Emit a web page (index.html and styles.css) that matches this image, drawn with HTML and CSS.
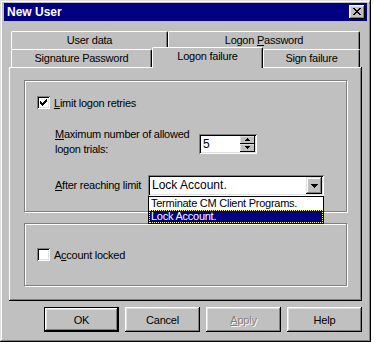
FILE: index.html
```html
<!DOCTYPE html>
<html lang="en">
<head>
  <meta charset="UTF-8" />
  <title>New User</title>
  <link rel="stylesheet" href="styles.css">
</head>
<body>
  <div class="window">
    <div class="titlebar">
      <span class="title">New User</span>
      <span class="close-btn">
        <svg width="8" height="7" viewBox="0 0 8 7" shape-rendering="crispEdges">
          <path d="M0 0h2v1h-2zM6 0h2v1h-2zM1 1h2v1h-2zM5 1h2v1h-2zM2 2h4v1h-4zM3 3h2v1h-2zM2 4h4v1h-4zM1 5h2v1h-2zM5 5h2v1h-2zM0 6h2v1h-2zM6 6h2v1h-2z" fill="#000"/>
        </svg>
      </span>
    </div>

    <div class="tabs">
      <div class="tab-row">
        <div class="tab tab-user">User data</div>
        <div class="tab tab-logon-pw">Logon <u>P</u>assword</div>
      </div>
      <div class="tab-row">
        <div class="tab tab-sign-pw">Signature Password</div>
        <div class="tab tab-logon-fail active">Logon failure</div>
        <div class="tab tab-sign-fail">Sign failure</div>
      </div>
    </div>

    <div class="panel">
      <div class="group group-retries">
        <label class="check-row">
          <span class="checkbox">
            <svg width="9" height="9" viewBox="0 0 9 9" shape-rendering="crispEdges">
              <path d="M7 1h1v1h-1zM6 2h2v1h-2zM1 3h1v1h-1zM5 3h3v1h-3zM1 4h2v1h-2zM4 4h3v1h-3zM1 5h5v1h-5zM2 6h3v1h-3zM3 7h1v1h-1z" fill="#000"/>
            </svg>
          </span>
          <span><u>L</u>imit logon retries</span>
        </label>

        <div class="field-row trials">
          <span class="field-label trials-label"><u>M</u>aximum number of allowed<br>logon trials:</span>
          <div class="spinbox">
            <span class="spin-value">5</span>
            <div class="spin-buttons">
              <span class="spin-btn">
                <svg width="5" height="3" viewBox="0 0 5 3" shape-rendering="crispEdges"><path d="M2 0h1v1h-1zM1 1h3v1h-3zM0 2h5v1h-5z" fill="#000"/></svg>
              </span>
              <span class="spin-btn">
                <svg width="5" height="3" viewBox="0 0 5 3" shape-rendering="crispEdges"><path d="M0 0h5v1h-5zM1 1h3v1h-3zM2 2h1v1h-1z" fill="#000"/></svg>
              </span>
            </div>
          </div>
        </div>

        <div class="field-row limit">
          <span class="field-label limit-label"><u>A</u>fter reaching limit</span>
          <div class="combo">
            <span class="combo-value">Lock Account.</span>
            <span class="combo-btn">
              <svg width="7" height="4" viewBox="0 0 7 4" shape-rendering="crispEdges"><path d="M0 0h7v1h-7zM1 1h5v1h-5zM2 2h3v1h-3zM3 3h1v1h-1z" fill="#000"/></svg>
            </span>
            <ul class="dropdown">
              <li>Terminate CM Client Programs.</li>
              <li class="selected">Lock Account.</li>
            </ul>
          </div>
        </div>
      </div>

      <div class="group group-locked">
        <label class="check-row">
          <span class="checkbox"></span>
          <span>A<u>c</u>count locked</span>
        </label>
      </div>
    </div>

    <div class="buttons">
      <button class="btn default">OK</button>
      <button class="btn">Cancel</button>
      <button class="btn disabled"><u>A</u>pply</button>
      <button class="btn">Help</button>
    </div>
  </div>
</body>
</html>
```

FILE: styles.css
```css
:root {
  --face: #c0c0c0;
  --light: #dfdfdf;
  --shadow: #808080;
  --navy: #000080;
}

* {
  box-sizing: border-box;
}

body {
  margin: 0;
  background: #fff;
  font-family: "Liberation Sans", Arial, sans-serif;
  font-size: 11px;
  letter-spacing: -0.25px;
  color: #000;
}

u {
  text-decoration-thickness: 1px;
  text-underline-offset: 1px;
}

.window {
  width: 371px;
  height: 342px;
  padding: 3px 4px 4px 4px;
  background: var(--face);
  box-shadow: inset -1px -1px #000, inset 1px 1px var(--light),
              inset -2px -2px var(--shadow), inset 2px 2px #fff;
}

.titlebar {
  height: 18px;
  background: var(--navy);
  display: flex;
  align-items: center;
  justify-content: space-between;
  padding: 0 2px 0 3px;
}

.title {
  color: #fff;
  font-weight: bold;
  font-size: 12px;
  letter-spacing: 0;
}

.close-btn {
  width: 16px;
  height: 14px;
  display: flex;
  align-items: center;
  justify-content: center;
  padding: 0 1px 1px 0;
  background: var(--face);
  box-shadow: inset -1px -1px #000, inset 1px 1px #fff,
              inset -2px -2px var(--shadow), inset 2px 2px var(--light);
}

/* tabs */
.tabs {
  margin: 10px 0 0 5px;
  padding-left: 2px;
}

.tab-row {
  display: flex;
  height: 18px;
}

.tab {
  height: 18px;
  text-align: center;
  line-height: 17px;
  background: var(--face);
  border-top: 1px solid #fff;
  border-left: 1px solid #fff;
  border-right: 1px solid #000;
  border-radius: 2px 2px 0 0;
  box-shadow: inset -1px 0 var(--shadow);
  white-space: nowrap;
}

.tab-user { width: 157px; }
.tab-logon-pw { width: 192px; }
.tab-sign-pw { width: 141px; }
.tab-logon-fail { width: 111px; }
.tab-sign-fail { width: 97px; }

.tab.active {
  position: relative;
  z-index: 1;
  height: 21px;
  margin-top: -2px;
  padding-bottom: 3px;
}

/* panel */
.panel {
  margin-left: 5px;
  width: 353px;
  height: 234px;
  padding: 13px 14px 0 15px;
  box-shadow: inset -1px -1px #000, inset 1px 1px #fff, inset -2px -2px var(--shadow);
}

.group {
  width: 323px;
  border: 1px solid var(--shadow);
  box-shadow: inset 1px 1px #fff, 1px 1px #fff;
}

.group-retries {
  height: 132px;
  padding: 15px 0 0 12px;
}

.group-locked {
  height: 63px;
  margin-top: 11px;
  padding-left: 12px;
  display: flex;
  align-items: center;
}

.check-row {
  display: flex;
  align-items: center;
  gap: 4px;
  height: 13px;
}

.checkbox {
  width: 13px;
  height: 13px;
  padding: 2px;
  background: #fff;
  box-shadow: inset 1px 1px var(--shadow), inset -1px -1px #fff,
              inset 2px 2px #000, inset -2px -2px var(--light);
}

.checkbox svg {
  display: block;
}

.field-row {
  display: flex;
  align-items: center;
  padding-left: 18px;
}

.field-label {
  line-height: 15px;
}

.trials {
  margin-top: 18px;
}

.trials-label {
  width: 144px;
}

.limit {
  margin-top: 18px;
}

.limit-label {
  width: 93px;
  white-space: nowrap;
}

.spinbox {
  width: 58px;
  height: 20px;
  margin-top: 3px;
  padding: 2px;
  display: flex;
  background: #fff;
  box-shadow: inset 1px 1px var(--shadow), inset -1px -1px #fff,
              inset 2px 2px #000, inset -2px -2px var(--light);
}

.spin-value {
  flex: 1;
  padding-left: 2px;
  font-size: 12px;
  letter-spacing: 0;
  line-height: 16px;
}

.spin-buttons {
  display: flex;
  flex-direction: column;
  width: 15px;
}

.spin-btn {
  height: 8px;
  display: flex;
  align-items: center;
  justify-content: center;
  background: var(--face);
  box-shadow: inset -1px -1px #000, inset 1px 1px var(--light);
}

.spin-btn svg {
  display: block;
}

.combo {
  position: relative;
  width: 176px;
  height: 21px;
  padding: 2px;
  display: flex;
  background: #fff;
  box-shadow: inset 1px 1px var(--shadow), inset -1px -1px #fff,
              inset 2px 2px #000, inset -2px -2px var(--light);
}

.combo-value {
  flex: 1;
  padding-left: 2px;
  font-size: 12px;
  letter-spacing: 0;
  line-height: 17px;
}

.combo-btn {
  width: 16px;
  height: 17px;
  display: flex;
  align-items: center;
  justify-content: center;
  background: var(--face);
  box-shadow: inset -1px -1px #000, inset 1px 1px var(--light),
              inset -2px -2px var(--shadow), inset 2px 2px #fff;
}

.dropdown {
  position: absolute;
  z-index: 2;
  left: 0;
  top: 100%;
  width: 176px;
  margin: 0;
  padding: 0;
  list-style: none;
  background: #fff;
  border: 1px solid #000;
}

.dropdown li {
  height: 13px;
  line-height: 13px;
  padding-left: 2px;
  white-space: nowrap;
}

.dropdown li.selected {
  background: var(--navy);
  color: #fff;
  outline: 1px dotted #ffff80;
  outline-offset: -1px;
}

/* buttons */
.buttons {
  display: flex;
  justify-content: flex-end;
  gap: 6px;
  width: 358px;
  margin-top: 6px;
}

.btn {
  width: 75px;
  height: 25px;
  padding: 0;
  border: none;
  background: var(--face);
  font-family: inherit;
  font-size: 11px;
  letter-spacing: -0.2px;
  color: #000;
  box-shadow: inset -1px -1px #000, inset 1px 1px #fff,
              inset -2px -2px var(--shadow), inset 2px 2px var(--light);
}

.btn.default {
  box-shadow: inset 0 0 0 1px #000, inset -2px -2px #000, inset 2px 2px #fff,
              inset -3px -3px var(--shadow), inset 3px 3px var(--light);
}

.btn.disabled {
  color: var(--shadow);
  text-shadow: 1px 1px #fff;
}
```
